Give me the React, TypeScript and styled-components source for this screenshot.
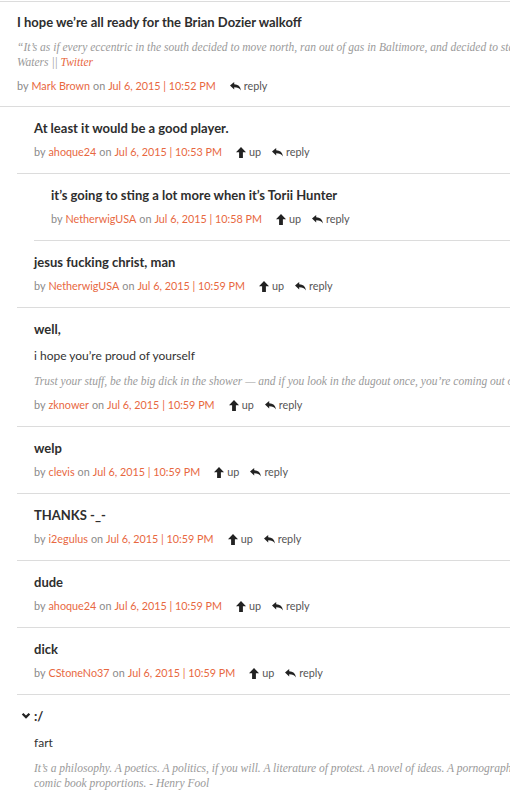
import React from "react";
import styled, { createGlobalStyle } from "styled-components";

const Global = createGlobalStyle`
  html, body { margin: 0; padding: 0; background: #fff; overflow-x: hidden; }
  body { font-family: Lato, "Open Sans", sans-serif; color: #333; }
`;

const Page = styled.div`
  width: 588px;
  margin-top: 1px;
  border-top: 1px solid #dcdcdc;
`;

const CommentBox = styled.div``;

const Body = styled.div<{ $root?: boolean }>`
  padding: ${(p) => (p.$root ? "11px 0 12px 17px" : "12px 0 13px 17px")};
  border-bottom: 1px solid #dcdcdc;
`;

const Children = styled.div`
  margin-left: 17px;
`;

const Title = styled.div`
  display: flex;
  align-items: center;
  font-size: 13px;
  font-weight: 700;
  line-height: 18px;
  color: #2e2e2e;
`;

const Toggle = styled.span`
  display: inline-flex;
  align-items: center;
  justify-content: center;
  width: 14px;
  margin-left: -15px;
  margin-right: 1px;
  color: #333;
`;

const Text = styled.div`
  margin-top: 9px;
  font-size: 12px;
  line-height: 18px;
  color: #333;
`;

const Sig = styled.div`
  margin-top: 9px;
  font-family: "Liberation Serif", serif;
  font-style: italic;
  font-size: 11.5px;
  line-height: 15px;
  color: #9a9a9a;
  a { color: #e8683f; text-decoration: none; }
`;

const Meta = styled.div<{ $gap: number }>`
  display: flex;
  align-items: center;
  margin-top: ${(p) => p.$gap}px;
  font-size: 10.8px;
  line-height: 16px;
  color: #8a8a8a;
  white-space: nowrap;
`;

const Orange = styled.span`
  color: #e8683f;
  margin: 0 3px;
`;

const Action = styled.span`
  display: inline-flex;
  align-items: center;
  gap: 3px;
  margin-left: 11px;
  color: #555;
`;

const UpIcon = () => (
  <svg width="10" height="11" viewBox="0 0 10 11">
    <path d="M5 0 L10 5.2 H6.9 V11 H3.1 V5.2 H0 Z" fill="#222" />
  </svg>
);

const ReplyIcon = () => (
  <svg width="11" height="9" viewBox="0 0 11 9">
    <path
      d="M0 3.6 L4.2 0 V2.2 C8 2.3 10.4 4.3 11 8.6 C9.6 6.2 7.4 5.2 4.2 5.2 V7.4 Z"
      fill="#222"
    />
  </svg>
);

const Chevron = () => (
  <svg width="10" height="7" viewBox="0 0 10 7">
    <path d="M0.8 1.6 L2.4 0 L5 2.6 L7.6 0 L9.2 1.6 L5 5.8 Z" fill="#222" />
  </svg>
);

type C = {
  title: string;
  user: string;
  time: string;
  text?: string;
  sig?: React.ReactNode;
  up?: boolean;
  toggle?: boolean;
  children?: C[];
};

const data: C[] = [
  {
    title: "I hope we’re all ready for the Brian Dozier walkoff",
    user: "Mark Brown",
    time: "10:52 PM",
    up: false,
    sig: (
      <>
        “It’s as if every eccentric in the south decided to move north, ran out of gas in
        Baltimore, and decided to stay.” - John Waters || <a>Twitter</a>
      </>
    ),
    children: [
      {
        title: "At least it would be a good player.",
        user: "ahoque24",
        time: "10:53 PM",
        up: true,
        children: [
          {
            title: "it’s going to sting a lot more when it’s Torii Hunter",
            user: "NetherwigUSA",
            time: "10:58 PM",
            up: true,
          },
        ],
      },
      { title: "jesus fucking christ, man", user: "NetherwigUSA", time: "10:59 PM", up: true },
      {
        title: "well,",
        text: "i hope you’re proud of yourself",
        sig: (
          <>
            Trust your stuff, be the big dick in the shower — and if you look in the dugout
            once, you’re coming out of the game.
          </>
        ),
        user: "zknower",
        time: "10:59 PM",
        up: true,
      },
      { title: "welp", user: "clevis", time: "10:59 PM", up: true },
      { title: "THANKS -_-", user: "i2egulus", time: "10:59 PM", up: true },
      { title: "dude", user: "ahoque24", time: "10:59 PM", up: true },
      { title: "dick", user: "CStoneNo37", time: "10:59 PM", up: true },
      {
        title: ":/",
        toggle: true,
        text: "fart",
        sig: (
          <>
            It’s a philosophy. A poetics. A politics, if you will. A literature of protest. A
            novel of ideas. A pornographic magazine of comic book proportions. - Henry Fool
          </>
        ),
        user: "CStoneNo37",
        time: "11:00 PM",
        up: true,
      },
    ],
  },
];

const Comment = ({ c, root }: { c: C; root?: boolean }) => (
  <CommentBox>
    <Body $root={root}>
      <Title>
        {c.toggle && (
          <Toggle>
            <Chevron />
          </Toggle>
        )}
        {c.title}
      </Title>
      {c.text && <Text>{c.text}</Text>}
      {c.sig && <Sig>{c.sig}</Sig>}
      <Meta $gap={c.sig ? 8 : 7}>
        by<Orange>{c.user}</Orange>on<Orange>Jul 6, 2015 | {c.time}</Orange>
        {c.up && (
          <Action>
            <UpIcon />
            up
          </Action>
        )}
        <Action>
          <ReplyIcon />
          reply
        </Action>
      </Meta>
    </Body>
    {c.children && (
      <Children>
        {c.children.map((k, i) => (
          <Comment key={i} c={k} />
        ))}
      </Children>
    )}
  </CommentBox>
);

export default function App() {
  return (
    <>
      <Global />
      <Page>
        {data.map((c, i) => (
          <Comment key={i} c={c} root />
        ))}
      </Page>
    </>
  );
}
